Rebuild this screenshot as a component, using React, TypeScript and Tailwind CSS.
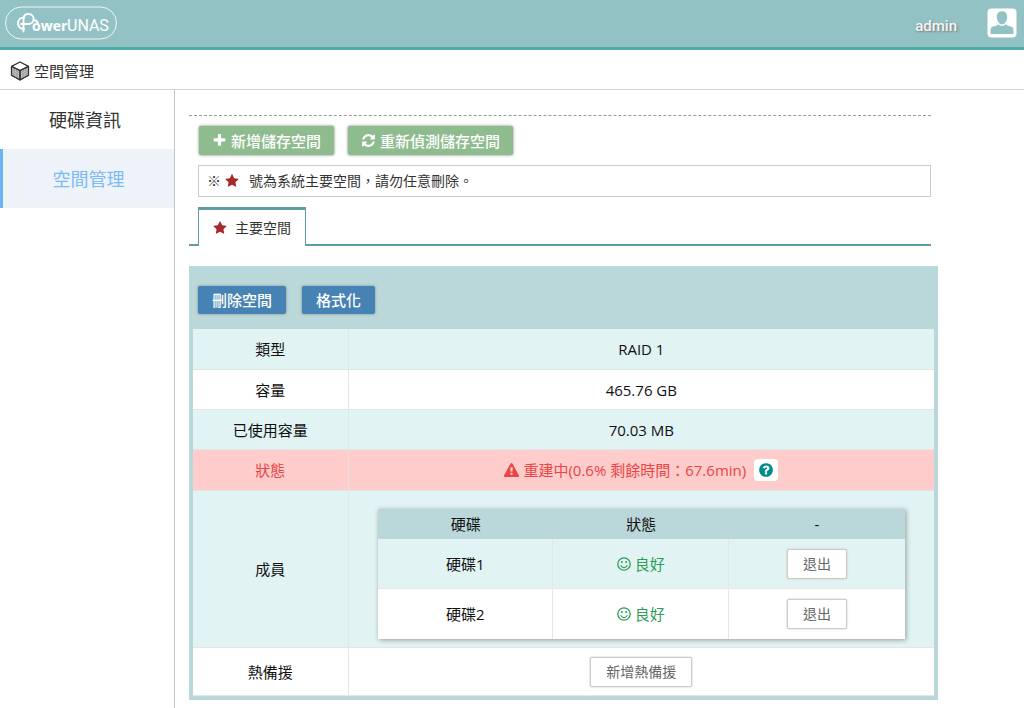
import React from "react";
import clsx from "clsx";

const ICONS = {
    plus: "M1600 736v192q0 40-28 68t-68 28h-416v416q0 40-28 68t-68 28h-192q-40 0-68-28t-28-68v-416h-416q-40 0-68-28t-28-68v-192q0-40 28-68t68-28h416v-416q0-40 28-68t68-28h192q40 0 68 28t28 68v416h416q40 0 68 28t28 68z",
    refresh:
        "M1639 1056q0 5-1 7-64 268-268 434.5t-478 166.5q-146 0-282.5-55t-243.5-157l-129 129q-19 19-45 19t-45-19-19-45v-448q0-26 19-45t45-19h448q26 0 45 19t19 45-19 45l-137 137q71 66 161 102t187 36q134 0 250-65t186-179q11-17 53-117 8-23 30-23h192q13 0 22.5 9.5t9.5 22.5zm25-800v448q0 26-19 45t-45 19h-448q-26 0-45-19t-19-45 19-45l138-138q-148-137-349-137-134 0-250 65t-186 179q-11 17-53 117-8 23-30 23h-199q-13 0-22.5-9.5t-9.5-22.5v-7q65-268 270-434.5t480-166.5q146 0 284 55.5t245 156.5l130-129q19-19 45-19t45 19 19 45z",
    star: "M1728 647q0 22-26 48l-363 354 86 500q1 7 1 20 0 21-10.5 35.5t-30.5 14.5q-19 0-40-12l-449-236-449 236q-22 12-40 12-21 0-31.5-14.5t-10.5-35.5q0-6 2-20l86-500-364-354q-25-27-25-48 0-37 56-46l502-73 225-455q19-41 49-41t49 41l225 455 502 73q56 9 56 46z",
    warning:
        "M1024 1375v-190q0-14-9.5-23.5t-22.5-9.5h-192q-13 0-22.5 9.5t-9.5 23.5v190q0 14 9.5 23.5t22.5 9.5h192q13 0 22.5-9.5t9.5-23.5zm-2-374l18-459q0-12-10-19-13-11-24-11h-220q-11 0-24 11-10 7-10 21l17 457q0 10 10 16.5t24 6.5h185q14 0 23.5-6.5t10.5-16.5zm-14-934l768 1408q35 63-2 126-17 29-46.5 46t-63.5 17h-1536q-34 0-63.5-17t-46.5-46q-37-63-2-126l768-1408q17-31 47-49t65-18 65 18 47 49z",
    question:
        "M1024 1376v-192q0-14-9-23t-23-9h-192q-14 0-23 9t-9 23v192q0 14 9 23t23 9h192q14 0 23-9t9-23zm256-672q0-88-55.5-163t-138.5-116-170-41q-243 0-371 213-15 24 8 42l132 100q7 6 19 6 16 0 25-12 53-68 86-92 34-24 86-24 48 0 85.5 26t37.5 59q0 38-20 61t-68 45q-63 28-115.5 86.5t-52.5 125.5v36q0 14 9 23t23 9h192q14 0 23-9t9-23q0-19 21.5-49.5t54.5-49.5q32-18 49-28.5t46-35 44.5-48 28-60.5 12.5-81zm384 192q0 209-103 385.5t-279.5 279.5-385.5 103-385.5-103-279.5-279.5-103-385.5 103-385.5 279.5-279.5 385.5-103 385.5 103 279.5 279.5 103 385.5z",
};

const Icon: React.FC<{ name: keyof typeof ICONS; className?: string }> = ({ name, className }) => (
    <svg viewBox="0 0 1792 1792" fill="currentColor" aria-hidden="true" className={clsx("shrink-0", className)}>
        <path d={ICONS[name]} />
    </svg>
);

const Smile = () => (
    <svg viewBox="0 0 14 14" fill="none" stroke="currentColor" aria-hidden="true" className="w-3.5 h-3.5 shrink-0">
        <circle cx="7" cy="7" r="6.2" strokeWidth="1.3" />
        <path d="M4 8.6c.5 1.3 1.6 2 3 2s2.5-.7 3-2" strokeWidth="1.2" strokeLinecap="round" />
        <circle cx="4.9" cy="5.1" r="1" fill="currentColor" stroke="none" />
        <circle cx="9.1" cy="5.1" r="1" fill="currentColor" stroke="none" />
    </svg>
);

const Logo = () => (
    <svg viewBox="0 0 114 34" className="w-[114px] h-[34px]" fill="none" stroke="#fff" aria-hidden="true">
        <rect x="1.5" y="1" width="111" height="32" rx="16" strokeOpacity="0.85" />
        {/* cloud */}
        <g strokeWidth="1.9" strokeLinecap="round">
            <path d="M20 11.500c-3.500 0-6 2.500-6 5.800s2.500 5.700 6 5.700" />
            <path d="M19.500 25.500V13c0-3.200 2.200-5 5-5s5.200 2 5.200 5-2.200 5-5.200 5H17" />
            <path d="M29.500 14c2.500.2 4 1.500 4.500 3.500" />
        </g>
        <g fill="#fff" stroke="none">
            <text x="28" y="25" fontSize="14" fontWeight="700" fontFamily='"Open Sans", sans-serif'>
                ower
            </text>
            <text x="63" y="25" fontSize="16" fontFamily="Roboto, sans-serif">
                UNAS
            </text>
        </g>
    </svg>
);

const Cube = () => (
    <svg viewBox="0 0 20 20" className="w-5 h-5" fill="none" stroke="#333" strokeLinejoin="round" aria-hidden="true">
        <path d="M1.5 5.3 10 9.5v9.5l-8.5-4.7zM18.5 5.3 10 9.5v9.5l8.5-4.7z" fill="#ccc" />
        <path
            d="M1.5 7.5 10 12l8.5-4.5M1.5 9.8 10 14.4l8.5-4.6M1.5 12 10 16.7l8.5-4.7M4 6.5v9M7 8v9M13 8v9M16 6.5v9"
            stroke="#888"
            strokeWidth=".6"
        />
        <path d="M10 1l8.5 4.3v9L10 19l-8.5-4.7v-9zM1.5 5.3 10 9.6l8.5-4.3M10 9.6V19" strokeWidth="1.3" />
    </svg>
);

const UserIcon = () => (
    <svg viewBox="0 0 30 30" className="w-[30px] h-[30px]" aria-hidden="true">
        <rect x=".5" y=".5" width="29" height="29" rx="4" fill="#fff" />
        <g fill="#93c2c4">
            <path d="M15 3.200c3.300 0 5.200 2.200 5.200 5.500 0 4-2.400 7.700-5.200 7.700s-5.200-3.700-5.200-7.700c0-3.300 1.900-5.500 5.200-5.500z" />
            <path d="M11.200 16.200c1.200 1.200 2.400 1.700 3.800 1.700s2.600-.5 3.800-1.700c.8 1.300 2 1.600 4.200 2.100 2.600.6 3.500 1.600 3.500 3.900v3.900h-23v-3.900c0-2.300.9-3.300 3.500-3.900 2.200-.5 3.400-.8 4.200-2.100z" />
        </g>
    </svg>
);

type ButtonProps = { variant: "green" | "blue" | "plain"; children: React.ReactNode };

const Button: React.FC<ButtonProps> = ({ variant, children }) => (
    <button
        type="button"
        className={clsx(
            "inline-flex items-center justify-center gap-1 rounded-xs",
            variant === "green" && "h-[29px] px-[13px] bg-[#8fbc8f] text-white text-[15px] font-medium shadow-[0_0_3px_#777]",
            variant === "blue" && "h-7 px-3.5 bg-[#4682b4] text-white text-[15px] font-medium shadow-[0_0_3px_#888]",
            variant === "plain" && "h-[30px] px-[15px] bg-white text-[#666] text-sm border border-[#ccc] shadow-[0_0_2px_#bbb]"
        )}
    >
        {children}
    </button>
);

const MENU = [
    { name: "硬碟資訊", href: "#disk", active: false },
    { name: "空間管理", href: "#volume", active: true },
];

const INFO = [
    { label: "類型", value: "RAID 1" },
    { label: "容量", value: "465.76 GB" },
    { label: "已使用容量", value: "70.03 MB" },
];

const DISKS = ["硬碟1", "硬碟2"];

const MemberTable = () => (
    <table className="w-[90%] mx-auto table-fixed border-separate border-spacing-0 shadow-[1px_1px_5px_#999]">
        <thead>
            <tr className="h-[30px] bg-[#bad7d9]">
                <th className="font-normal">硬碟</th>
                <th className="font-normal">狀態</th>
                <th className="font-normal">-</th>
            </tr>
        </thead>
        <tbody>
            {DISKS.map((disk, i) => (
                <tr key={disk} className={clsx("h-[50px]", i % 2 === 0 ? "bg-[#e1f3f3]" : "bg-white")}>
                    <td className={clsx("border-r border-[#e3e8e8]", i === 0 && "border-b")}>{disk}</td>
                    <td className={clsx("border-r border-[#e3e8e8] text-[#2e9e56]", i === 0 && "border-b")}>
                        <span className="flex items-center justify-center gap-1">
                            <Smile />
                            良好
                        </span>
                    </td>
                    <td className={clsx("border-[#e3e8e8]", i === 0 && "border-b")}>
                        <Button variant="plain">退出</Button>
                    </td>
                </tr>
            ))}
        </tbody>
    </table>
);

const App: React.FC = () => {
    return (
        <div className='min-h-screen flex flex-col bg-white text-[#111] text-[15px] leading-5 font-["Open_Sans","Noto_Sans_CJK_TC",sans-serif]'>
            <header className="flex items-center justify-between h-[50px] pl-1 pr-[7px] pb-0.5 bg-[#93c2c4] border-b-3 border-[#4eabaa]">
                <a href="#home" aria-label="PowerUNAS">
                    <Logo />
                </a>
                <div className="flex items-center gap-[30px]">
                    <span className="pt-1.5 font-[Roboto,sans-serif] font-medium text-[#f4f4f4] [text-shadow:1px_1px_2px_#777]">
                        admin
                    </span>
                    <button type="button" aria-label="admin">
                        <UserIcon />
                    </button>
                </div>
            </header>

            <div className="flex items-center gap-1 h-10 pt-0.5 pl-2.5 border-b border-[#d5d5d5]">
                <Cube />
                <h1 className="text-[15px] text-[#333]">空間管理</h1>
            </div>

            <div className="flex flex-1">
                <nav className="w-[175px] shrink-0 border-r border-[#c0c4c8]">
                    {MENU.map((item) => (
                        <a
                            key={item.name}
                            href={item.href}
                            className={clsx(
                                "flex items-center justify-center h-[59px] text-lg",
                                item.active
                                    ? "bg-[#edf3f8] text-[#7cb9f5] border-l-3 border-[#6cb3f5]"
                                    : "text-[#333] pr-1"
                            )}
                        >
                            {item.name}
                        </a>
                    ))}
                </nav>

                <main className="flex-1 min-w-0 pt-[25px] pl-3.5 pr-[86px] pb-2">
                    <div className="mr-[7px] pt-2.5 border-t border-dashed border-[#999]">
                        <div className="flex gap-3.5 pl-2.5">
                            <Button variant="green">
                                <Icon name="plus" className="w-[15px] h-[15px]" />
                                新增儲存空間
                            </Button>
                            <Button variant="green">
                                <Icon name="refresh" className="w-[15px] h-[15px]" />
                                重新偵測儲存空間
                            </Button>
                        </div>

                        <p className="flex items-center mt-2.5 ml-[9px] px-2 h-8 border border-[#ccc] text-sm text-[#333]">
                            ※
                            <Icon name="star" className="w-3.5 h-3.5 ml-1 mr-2.5 text-[#a52a2a]" />
                            號為系統主要空間，請勿任意刪除。
                        </p>

                        {/* Tabs */}
                        <div role="tablist" className="flex mt-2.5 h-[39px]">
                            <span className="w-[9px] border-b-2 border-[#5f9ea0]" />
                            <button
                                type="button"
                                role="tab"
                                aria-selected="true"
                                className="flex items-center gap-2 px-[14px] border border-t-3 border-b-0 border-[#5f9ea0] text-sm text-[#333]"
                            >
                                <Icon name="star" className="w-3.5 h-3.5 text-[#a52a2a]" />
                                主要空間
                            </button>
                            <span className="flex-1 border-b-2 border-[#5f9ea0]" />
                        </div>
                    </div>

                    <section className="mt-5 p-1 bg-[#bad7d9]">
                        <div className="flex items-start gap-4 h-[59px] pl-[5px] pt-4">
                            <Button variant="blue">刪除空間</Button>
                            <Button variant="blue">格式化</Button>
                        </div>

                        <table className="w-full table-fixed border-separate border-spacing-0 text-center [&>tbody>tr>*]:border-[#e0e6e6] [&>tbody>tr>th]:border-r">
                            <colgroup>
                                <col className="w-[21%]" />
                                <col />
                            </colgroup>
                            <tbody>
                                {INFO.map((row, i) => (
                                    <tr
                                        key={row.label}
                                        className={clsx(i === 0 ? "h-[41px]" : "h-10", i % 2 === 0 ? "bg-[#e1f3f3]" : "bg-white")}
                                    >
                                        <th className="font-normal border-b">{row.label}</th>
                                        <td className="border-b">{row.value}</td>
                                    </tr>
                                ))}
                                <tr className="h-[41px] bg-[#ffcccc] text-[#e84545]">
                                    <th className="font-normal border-b">狀態</th>
                                    <td className="border-b">
                                        <span className="flex items-center justify-center gap-1">
                                            <Icon name="warning" className="w-[15px] h-[15px]" />
                                            重建中(0.6% 剩餘時間：67.6min)
                                            <button
                                                type="button"
                                                aria-label="說明"
                                                className="flex items-center justify-center w-6 h-[22px] ml-1 bg-white rounded text-[#008b8b]"
                                            >
                                                <Icon name="question" className="w-4 h-4" />
                                            </button>
                                        </span>
                                    </td>
                                </tr>
                                <tr className="h-[157px] bg-[#e1f3f3]">
                                    <th className="font-normal border-b">成員</th>
                                    <td className="border-b pt-2.5">
                                        <MemberTable />
                                    </td>
                                </tr>
                                <tr className="h-12 bg-white">
                                    <th className="font-normal border-b">熱備援</th>
                                    <td className="border-b">
                                        <Button variant="plain">新增熱備援</Button>
                                    </td>
                                </tr>
                            </tbody>
                        </table>
                    </section>
                </main>
            </div>
        </div>
    );
};

export default App;
